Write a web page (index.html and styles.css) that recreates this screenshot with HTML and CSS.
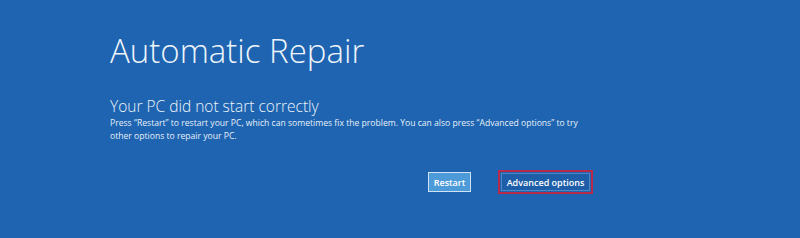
FILE: index.html
```html
<!DOCTYPE html>
<html lang="en">
<head>
    <meta charset="UTF-8">
    <meta name="viewport" content="width=device-width, initial-scale=1.0">
    <title>Automatic Repair</title>
    <link rel="stylesheet" href="styles.css">
</head>
<body>
    <div class="screen">
        <h1 class="title">Automatic Repair</h1>
        <h2 class="subtitle">Your PC did not start correctly</h2>
        <p class="message">Press “Restart” to restart your PC, which can sometimes fix the problem. You can also press “Advanced options” to try other options to repair your PC.</p>
        <div class="actions">
            <button class="btn btn-primary">Restart</button>
            <div class="highlight">
                <button class="btn btn-secondary">Advanced options</button>
            </div>
        </div>
    </div>
</body>
</html>
```

FILE: styles.css
```css
html, body {
    margin: 0;
    padding: 0;
    height: 100%;
}
body {
    background-color: #1e64b0;
    color: #fff;
    font-family: 'Open Sans', 'Segoe UI', sans-serif;
}
.screen {
    padding: 28px 0 0 110px;
}
.title {
    margin: 0;
    font-size: 33px;
    font-weight: 300;
    line-height: 46px;
    color: #eef4fb;
}
.subtitle {
    margin: 22px 0 0;
    font-size: 15.5px;
    font-weight: 300;
    line-height: 20px;
    color: #eef4fb;
}
.message {
    width: 490px;
    margin: 1px 0 0;
    font-size: 8.6px;
    line-height: 12.5px;
    color: #e8f0fa;
}
.actions {
    display: flex;
    align-items: center;
    gap: 27px;
    margin: 28px 0 0 318px;
}
.btn {
    font-family: inherit;
    font-size: 9px;
    font-weight: 600;
    color: #fff;
    padding: 0;
    cursor: pointer;
}
.btn-primary {
    width: 43px;
    height: 20px;
    background: #4c9ad8;
    border: 1px solid #cfe3f5;
}
.btn-secondary {
    width: 89px;
    height: 18px;
    background: #1e5ea8;
    border: 1px solid #4f86c4;
}
.highlight {
    display: flex;
    border: 2px solid #b8294a;
    padding: 1px;
}
```
